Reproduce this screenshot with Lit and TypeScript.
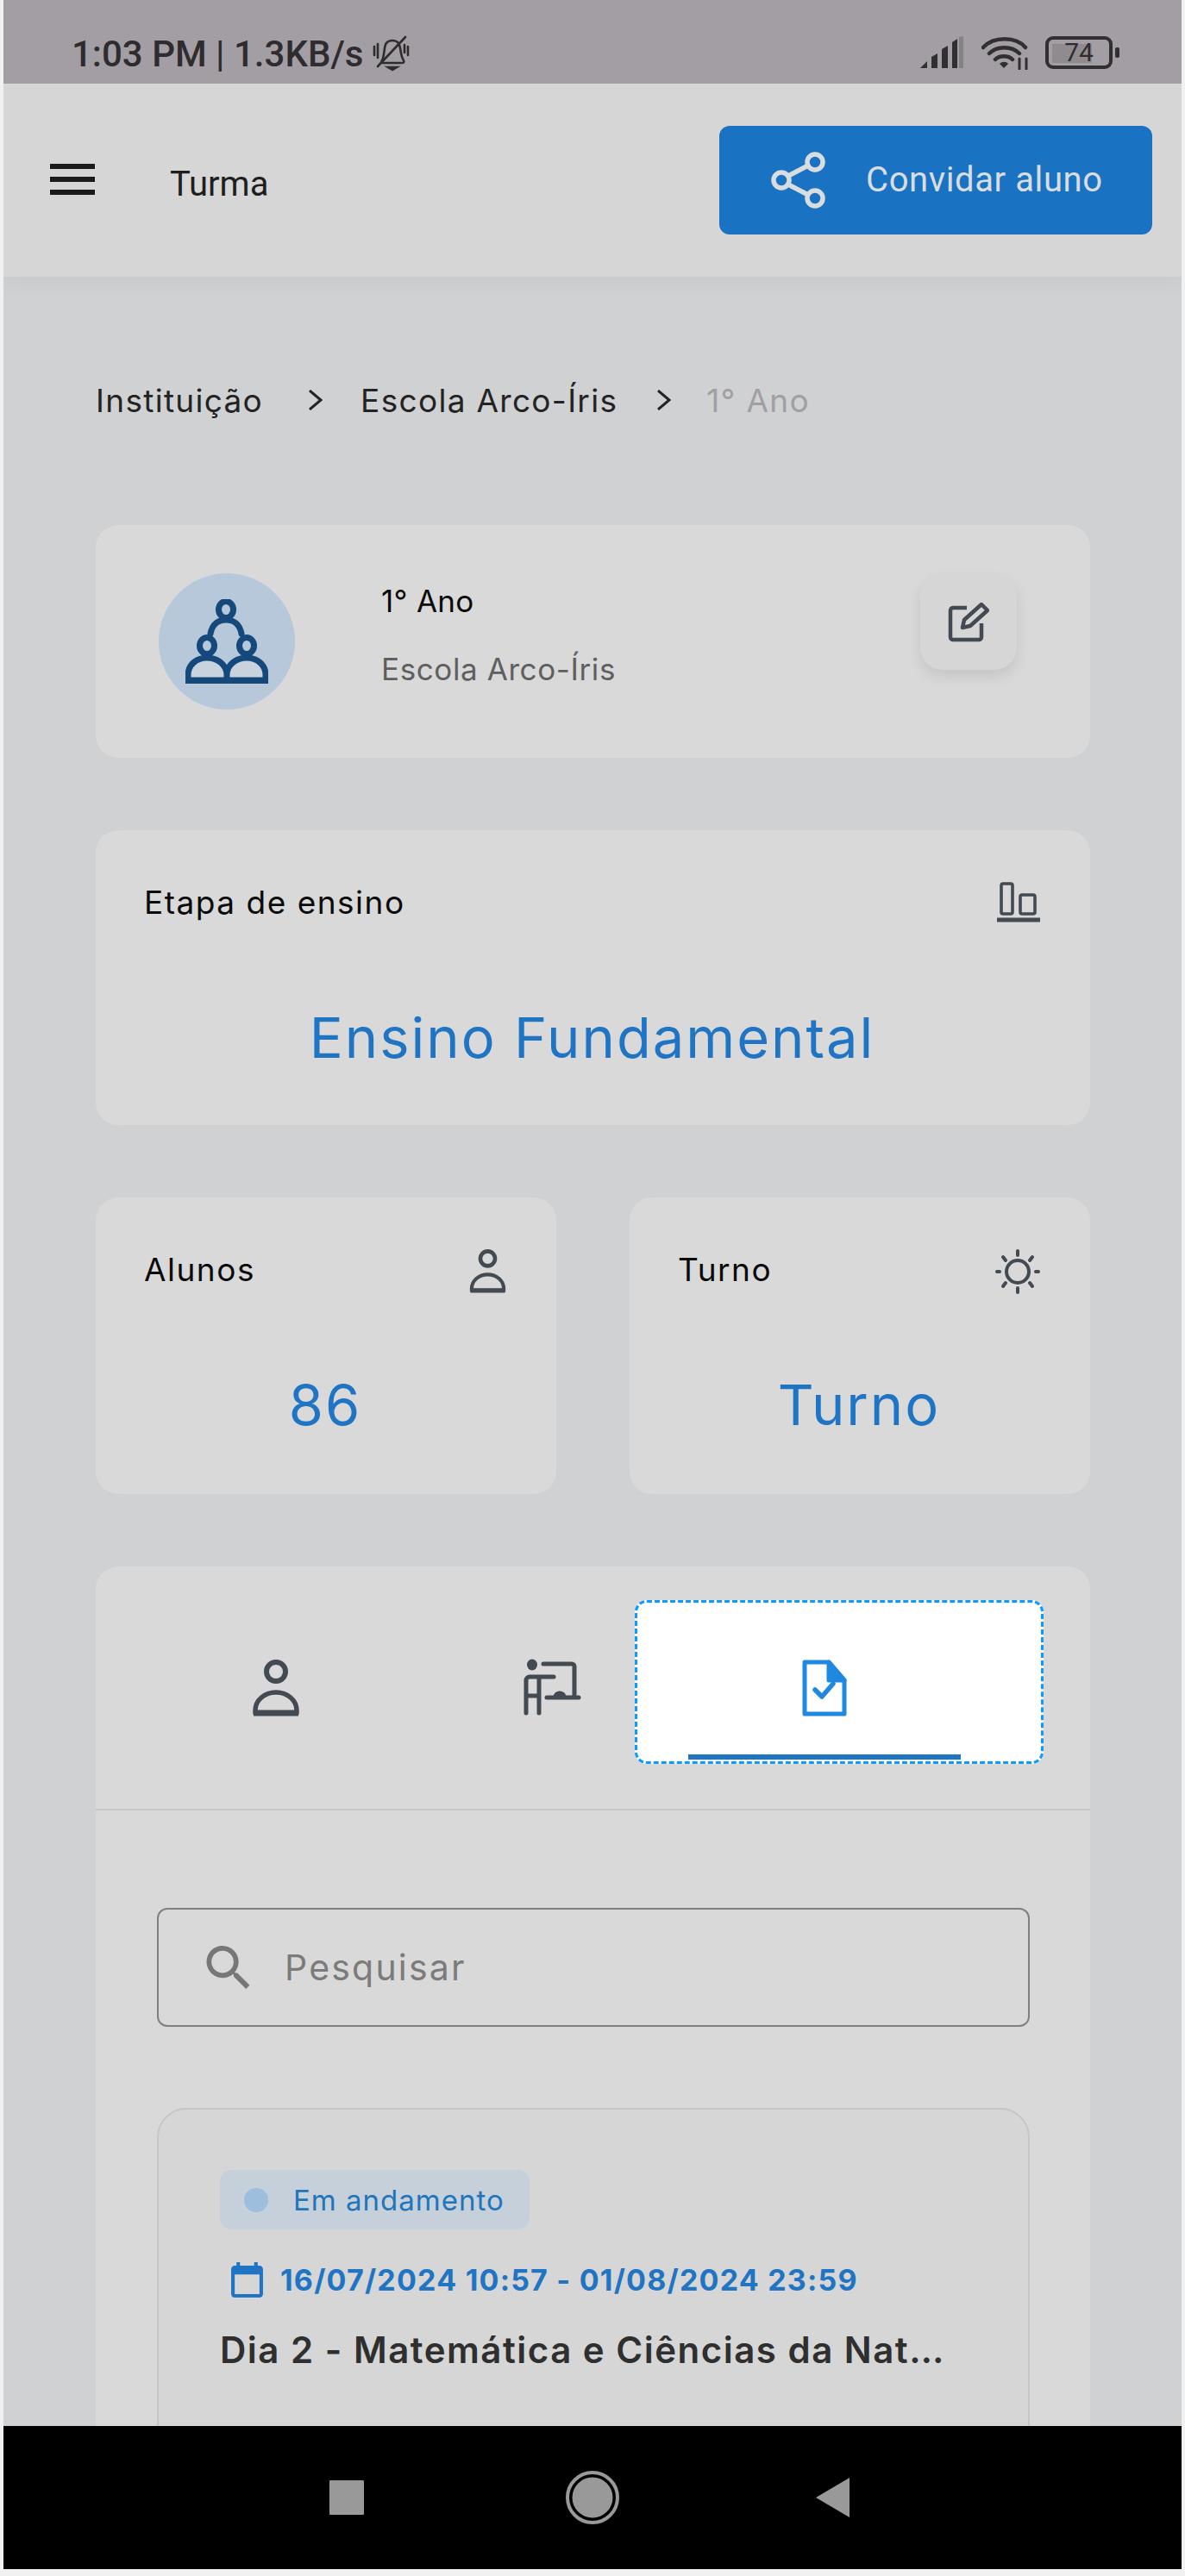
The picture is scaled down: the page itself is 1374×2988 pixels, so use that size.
import { LitElement, html, css, svg } from "lit";
import { customElement } from "lit/decorators.js";

const person = svg`<circle cx="27" cy="14" r="11" fill="none" stroke-width="6"/><path d="M3 62V59C3 47 14 38 27 38S51 47 51 59V62Z" fill="none" stroke-width="5.500" stroke-linejoin="round"/><path d="M1 62H53" stroke-width="7"/>`;
const chevron = svg`<path d="M2 1 15 12 2 23" fill="none" stroke="#232323" stroke-width="3"/>`;

@customElement("app-root")
export class AppRoot extends LitElement {
  static styles = css`
    :host { display: block; width: 1374px; height: 2988px; overflow: hidden; background: #f1f1f1; font-family: Inter, Roboto, sans-serif; }
    svg { display: block; flex: none; }
    .screen { display: flex; flex-direction: column; height: 2980px; margin: 0 4px; overflow: hidden; }
    .status { flex: none; height: 97px; background: #a39ea3; display: flex; color: #2e2c2e; position: relative; z-index: 3; }
    .status-left { display: flex; align-items: flex-start; padding: 40px 0 0 79px; gap: 11px; }
    .clock { font: 500 42px/46px Roboto, sans-serif; white-space: nowrap; }
    .status-left svg { margin-top: 1px; }
    .status-right { margin-left: auto; display: flex; align-items: flex-start; padding: 42px 72px 0 0; }
    .signal { margin-right: 21px; }
    .wifi { margin-right: 17px; }
    .battery { position: relative; display: flex; }
    .batt-num { position: absolute; left: 0; top: 0; width: 78px; height: 38px; text-align: center; font: 400 30px/38px Roboto, sans-serif; color: #2e2c2e; }
    .appbar { flex: none; height: 224px; background: #d6d6d6; display: flex; align-items: center; padding: 0 34px 0 54px; position: relative; z-index: 2; box-shadow: 0 4px 24px rgba(0,0,0,.06); }
    .menu { display: flex; flex-direction: column; gap: 9px; width: 52px; margin-top: -3px; }
    .menu i { display: block; height: 6px; background: #1b1b1b; }
    .appbar-title { margin-left: 87px; margin-top: 10px; font: 400 40px/46px Roboto, sans-serif; color: #1e1e1e; }
    .invite { margin-left: auto; width: 502px; height: 126px; border-radius: 12px; background: #1a73c2; color: #d9dde0; display: flex; align-items: center; padding-left: 60px; gap: 46px; box-sizing: border-box; font: 400 40px/46px Roboto, sans-serif; letter-spacing: .6px; }
    main { flex: 1; min-height: 0; overflow: hidden; background: #d0d1d3; padding: 0 106px 0 107px; display: flex; flex-direction: column; gap: 84px; }
    main > * { flex: none; }
    .crumbs { display: flex; align-items: center; height: 46px; margin-top: 120px; margin-bottom: 38px; font-size: 37px; letter-spacing: 1.300px; color: #232323; white-space: nowrap; }
    .crumbs svg { margin: 0 44px 0 52px; }
    .crumbs svg.b { margin: 0 41px 0 45px; }
    .crumbs .cur { color: #a0a0a3; }
    .card { background: #d9d9d9; border-radius: 26px; }
    .profile { height: 270px; display: flex; align-items: flex-start; padding: 56px 85px 0 73px; box-sizing: border-box; }
    .avatar { width: 158px; height: 158px; border-radius: 50%; background: #b6c8da; display: flex; align-items: center; justify-content: center; flex: none; }
    .names { margin-left: 100px; }
    .name { font-size: 35px; line-height: 42px; letter-spacing: .3px; color: #0b0b0b; margin-top: 11px; }
    .school { font-size: 35px; line-height: 42px; letter-spacing: .6px; color: #5f5f5f; margin-top: 37px; }
    .edit { margin-left: auto; width: 112px; height: 112px; border-radius: 26px; background: #d6d6d6; box-shadow: 0 8px 16px rgba(0,0,0,.09); display: flex; align-items: center; justify-content: center; }
    .stat { padding: 60px 58px 0 56px; box-sizing: border-box; height: 342px; }
    .stat-head { display: flex; justify-content: space-between; align-items: flex-start; height: 50px; font-size: 37px; line-height: 48px; letter-spacing: 1.500px; color: #0b0b0b; }
    .stat-value { text-align: center; font: 400 65px/80px Inter, sans-serif; letter-spacing: 2px; color: #1f75c4; margin-top: 91px; }
    .pair { display: flex; gap: 85px; }
    .pair .stat { flex: 1; height: 344px; }
    .panel { border-radius: 26px 26px 0 0; padding-bottom: 200px; }
    .tabs { display: flex; height: 283px; padding-left: 55px; border-bottom: 2px solid #c6c6c6; box-sizing: border-box; }
    .tab { width: 316px; height: 224px; display: flex; align-items: center; justify-content: center; padding-top: 58px; box-sizing: border-box; position: relative; }
    .first svg { margin-right: 9px; }
    .focus { position: absolute; left: -62px; right: -96px; top: 39px; height: 190px; background: #fff; border: 3px dashed #0d9bff; border-radius: 14px; box-sizing: border-box; }
    .bar { position: absolute; left: 0; right: 0; top: 218px; height: 6px; background: #1f75c4; }
    .tab svg { position: relative; }
    .panel-body { padding: 113px 70px 0 71px; }
    .search { height: 138px; box-sizing: border-box; border: 2px solid #808080; border-radius: 12px; display: flex; align-items: center; padding-left: 55px; gap: 40px; font-size: 41px; letter-spacing: 2.200px; color: #7b7b7b; }
    .exam { margin-top: 94px; height: 600px; border: 2px solid #c6c6c6; border-radius: 34px; background: #d6d6d6; padding: 70px 71px 0; box-sizing: border-box; }
    .chip { display: inline-flex; align-items: center; height: 69px; padding: 0 29px 0 28px; border-radius: 14px; background: #c5d0da; color: #2075bd; font-size: 33px; letter-spacing: 1px; gap: 29px; }
    .dot { width: 28px; height: 28px; border-radius: 50%; background: #9dbedd; }
    .dates { display: flex; align-items: center; gap: 19px; margin: 37px 0 0 12px; height: 42px; color: #1f75c4; font-size: 34px; letter-spacing: 1.200px; font-weight: 700; white-space: nowrap; }
    .title { margin-top: 36px; font-size: 42px; line-height: 50px; letter-spacing: 1.500px; font-weight: 600; color: #2f2f2f; white-space: nowrap; }
    .nav { flex: none; height: 166px; background: #000; display: flex; align-items: center; position: relative; z-index: 3; padding-left: 378px; }
    .nav-home { margin-left: 234px; }
    .nav-back { margin-left: 228px; }
  `;

  render() {
    const ink = "#434a52";
    return html`<div class="screen">
      <div class="status">
        <div class="status-left">
          <span class="clock">1:03 PM | 1.3KB/s</span>
          <svg width="44" height="42" viewBox="0 0 44 42" fill="none" stroke="#2e2c2e" stroke-width="2.600" stroke-linecap="round">
            <path d="M11 29C14 24 13 12 16 9C19 5 27 5 30 9C33 13 32 24 36 29C37 31 36 32 34 32H12C10 32 10 30 11 29Z"/>
            <path d="M6 36 38 2M2 13V23M6 10V26M41 13V23M37 11V20"/>
            <path d="M18 37H28L23 40Z" fill="#2e2c2e"/>
          </svg>
        </div>
        <div class="status-right">
          <svg class="signal" width="50" height="38" viewBox="0 0 50 38" fill="#322f32">
            <path d="M0 37 8 29V37ZM13 24 20 20V37H13ZM25 15 32 11V37H25ZM37 7 43 3V37H37Z"/>
            <path d="M45 1 50 0V37H45Z" fill="#858186"/>
          </svg>
          <svg class="wifi" width="57" height="39" viewBox="0 0 57 39" fill="none" stroke="#322f32" stroke-width="4.500" stroke-linecap="round">
            <path d="M2 13C14 0 40 0 51 13M9 20C18 11 35 11 44 20M16 27C21 22 31 22 36 27"/>
            <path d="M21 32C24 29 29 29 31 32L26 37Z" fill="#322f32" stroke="none"/>
            <path d="M44 26V38M52 26V38" stroke-width="3"/>
          </svg>
          <div class="battery">
            <svg width="86" height="38" viewBox="0 0 86 38">
              <rect x="8" y="9" width="46" height="22" fill="#8f8b8f"/>
              <rect x="2" y="2" width="74" height="34" rx="7" fill="none" stroke="#322f32" stroke-width="4"/>
              <rect x="81" y="13" width="5" height="12" rx="2" fill="#322f32"/>
            </svg>
            <span class="batt-num">74</span>
          </div>
        </div>
      </div>

      <div class="appbar">
        <div class="menu"><i></i><i></i><i></i></div>
        <div class="appbar-title">Turma</div>
        <div class="invite">
          <svg width="64" height="66" viewBox="0 0 64 66" fill="none" stroke="#d9dde0" stroke-width="5.500">
            <circle cx="51" cy="12" r="9"/><circle cx="12" cy="33" r="9"/><circle cx="51" cy="54" r="9"/>
            <path d="M20 28 43 16M20 38 43 50"/>
          </svg>
          <span>Convidar aluno</span>
        </div>
      </div>

      <main>
        <div class="crumbs">
          <span>Instituição</span><svg width="17" height="24" viewBox="0 0 17 24">${chevron}</svg><span>Escola Arco-Íris</span><svg class="b" width="17" height="24" viewBox="0 0 17 24">${chevron}</svg><span class="cur">1° Ano</span>
        </div>

        <section class="card profile">
          <div class="avatar">
            <svg width="96" height="98" viewBox="0 0 96 98" fill="none" stroke="#15497c" stroke-width="7">
              <ellipse cx="47" cy="12" rx="8.500" ry="9.500"/>
              <path d="M29 40C31 29 38 24 47 24S63 29 65 40" stroke-linecap="round"/>
              <ellipse cx="25" cy="54" rx="8.500" ry="9.500"/><ellipse cx="71" cy="54" rx="8.500" ry="9.500"/>
              <path d="M3 94V88C3 76 13 68 25 68S48 76 48 88V94ZM48 88C48 76 59 68 71 68S93 76 93 88V94H48Z" fill="#c9d3dd" stroke-linejoin="round"/>
              <path d="M0 95H96" stroke-width="6"/>
            </svg>
          </div>
          <div class="names">
            <div class="name">1° Ano</div>
            <div class="school">Escola Arco-Íris</div>
          </div>
          <div class="edit">
            <svg width="48" height="47" viewBox="0 0 48 47" fill="none" stroke="${ink}" stroke-width="4.500" stroke-linejoin="round">
              <path d="M22 7H6A3.500 3.500 0 0 0 3 10V41A3 3 0 0 0 6 44H36A3 3 0 0 0 39 41V25"/>
              <path d="M17 30 19 21 39 3 46 10 26 28Z"/>
            </svg>
          </div>
        </section>

        <section class="card stat">
          <div class="stat-head">
            <span>Etapa de ensino</span>
            <svg width="50" height="47" viewBox="0 0 50 47" fill="none" stroke="${ink}" stroke-width="3.600">
              <rect x="5" y="2" width="13" height="35" rx="2"/><rect x="27" y="15" width="17" height="22" rx="2"/>
              <path d="M0 44H50" stroke-width="5"/>
            </svg>
          </div>
          <div class="stat-value">Ensino Fundamental</div>
        </section>

        <div class="pair">
          <section class="card stat">
            <div class="stat-head">
              <span>Alunos</span>
              <svg width="43" height="51" viewBox="0 0 54 66" stroke="${ink}">${person}</svg>
            </div>
            <div class="stat-value">86</div>
          </section>
          <section class="card stat">
            <div class="stat-head">
              <span>Turno</span>
              <svg width="52" height="52" viewBox="0 0 52 52" fill="none" stroke="${ink}" stroke-width="4" stroke-linecap="round">
                <circle cx="26" cy="26" r="13"/>
                <path d="M26 2V7M26 45V50M2 26H5M47 26H50M9 9 12 13M43 9 40 13M9 43 12 39M43 43 40 39"/>
              </svg>
            </div>
            <div class="stat-value">Turno</div>
          </section>
        </div>

        <section class="card panel">
          <div class="tabs">
            <div class="tab first">
              <svg width="54" height="66" viewBox="0 0 54 66" stroke="${ink}">${person}</svg>
            </div>
            <div class="tab">
              <svg width="72" height="68" viewBox="0 0 72 68" fill="none" stroke="${ink}" stroke-width="5" stroke-linecap="round" stroke-linejoin="round">
                <ellipse cx="13" cy="7" rx="6" ry="6.500" fill="${ink}" stroke="none"/>
                <path d="M26 6H59A3 3 0 0 1 62 9V45M30 45H67M6 63V25A4 4 0 0 1 10 21H38M21 21V63M6 43H21"/>
                <path d="M40 44A5 4 0 0 1 50 44Z" fill="${ink}"/>
              </svg>
            </div>
            <div class="tab">
              <div class="focus"></div>
              <div class="bar"></div>
              <svg width="52" height="66" viewBox="0 0 52 66" fill="none" stroke="#1f88e0" stroke-width="5" stroke-linejoin="round">
                <path d="M3 3H31L49 24V63H3Z"/>
                <path d="M31 3L49 24H31Z" fill="#1f88e0"/>
                <path d="M15 35 23 43 36 28" stroke-width="5.500" stroke-linecap="round"/>
              </svg>
            </div>
          </div>
          <div class="panel-body">
            <div class="search">
              <svg width="51" height="50" viewBox="3 3 17.500 17.500" fill="#777"><path d="M15.500 14h-.79l-.28-.27C15.410 12.590 16 11.110 16 9.500 16 5.910 13.090 3 9.500 3S3 5.910 3 9.500 5.910 16 9.500 16c1.610 0 3.090-.59 4.230-1.570l.27.28v.79l5 4.990L20.490 19l-4.990-5zm-6 0C7.010 14 5 11.990 5 9.500S7.010 5 9.500 5 14 7.010 14 9.500 11.990 14 9.500 14z"/></svg>
              <span>Pesquisar</span>
            </div>
            <article class="exam">
              <div class="chip"><span class="dot"></span><span>Em andamento</span></div>
              <div class="dates">
                <svg width="39" height="41" viewBox="3 2 18 20" fill="#1f75c4"><path d="M19 4h-1V2h-2v2H8V2H6v2H5c-1.100 0-2 .9-2 2v14c0 1.100.9 2 2 2h14c1.100 0 2-.9 2-2V6c0-1.100-.9-2-2-2zm0 16H5V9h14v11z"/></svg>
                <span>16/07/2024 10:57 - 01/08/2024 23:59</span>
              </div>
              <div class="title">Dia 2 - Matemática e Ciências da Nat…</div>
            </article>
          </div>
        </section>
      </main>

      <nav class="nav">
        <svg width="40" height="40"><rect width="40" height="40" rx="1" fill="#999"/></svg>
        <svg class="nav-home" width="62" height="62" viewBox="0 0 62 62"><circle cx="31" cy="31" r="29" fill="none" stroke="#999" stroke-width="4"/><circle cx="31" cy="31" r="23.500" fill="#999"/></svg>
        <svg class="nav-back" width="40" height="46" viewBox="0 0 40 46"><path d="M39 0V46L0 23Z" fill="#999"/></svg>
      </nav>
    </div>`;
  }
}
